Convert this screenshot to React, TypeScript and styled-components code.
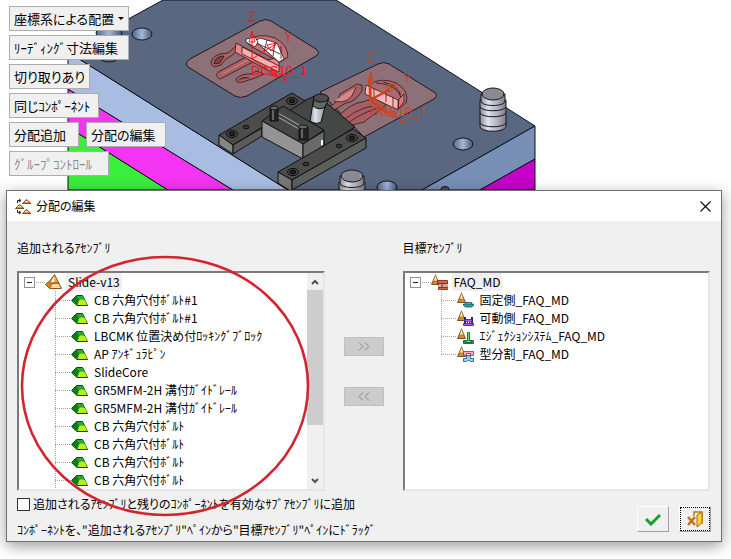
import React, { useState } from "react";
import styled, { createGlobalStyle, css } from "styled-components";

const GlobalStyle = createGlobalStyle`
  * { box-sizing: border-box; }
  body {
    margin: 0;
    background: #fff;
    color: #000;
    font-family: "Noto Sans CJK JP", sans-serif;
    font-size: 12px;
    line-height: 18px;
    font-feature-settings: "palt";
  }
  button, input { font: inherit; font-feature-settings: inherit; color: inherit; }
`;

const Page = styled.main`
  position: relative;
  padding-bottom: 17px;
  overflow: hidden;
`;

const Viewer = styled.section`
  display: grid;
  height: 190px;
  overflow: hidden;
  > * { grid-area: 1 / 1; }
`;

const Drawing = styled.svg`
  display: block;
  width: 100%;
  height: 190px;
`;

const Toolbar = styled.div`
  display: flex;
  flex-direction: column;
  align-items: flex-start;
  gap: 4px;
  padding: 6px 9px;
  z-index: 1;
`;

const ToolRow = styled.div`
  display: flex;
  gap: 7px;
`;

const ToolButton = styled.button<{ $width: number }>`
  display: flex;
  align-items: center;
  gap: 4px;
  min-width: ${(p) => p.$width}px;
  height: 25px;
  padding: 0 4px;
  border: 1px solid #adadad;
  background: #f0f0f0;
  font-size: 13px;
  line-height: 20px;
  white-space: nowrap;
  &:disabled { color: #8a8a8a; }
`;

const Caret = styled.span`
  border: 3px solid transparent;
  border-top-color: #000;
  border-bottom: 0;
`;

const Dialog = styled.section`
  position: relative;
  margin: 0 9px 0 6px;
  border: 1px solid #6f6f6f;
  background: #f0f0f0;
  box-shadow: 0 4px 14px rgba(0, 0, 0, 0.4);
`;

const TitleBar = styled.header`
  display: flex;
  align-items: center;
  gap: 4px;
  height: 30px;
  padding: 0 8px;
  background: #fff;
`;

const Title = styled.h1`
  flex: 1;
  margin: 0;
  font-size: 12px;
  font-weight: 400;
`;

const CloseButton = styled.button`
  display: flex;
  padding: 2px;
  border: 0;
  background: none;
`;

const Panes = styled.div`
  display: grid;
  grid-template-columns: minmax(0, 1fr) 78px minmax(0, 1fr);
  padding: 18px 11px 0 10px;
`;

const Pane = styled.section`
  display: flex;
  flex-direction: column;
  gap: 14px;
`;

const PaneLabel = styled.h2`
  margin: 0;
  font-size: 12px;
  font-weight: 400;
  line-height: 18px;
`;

const TreeBox = styled.div`
  display: flex;
  height: 220px;
  border: 2px solid #fff;
  border-top-color: #7b7b7b;
  border-left-color: #7b7b7b;
  border-right-color: #e6e6e6;
  border-bottom-color: #e6e6e6;
  background: #fff;
`;

const Tree = styled.ul`
  flex: 1;
  margin: 0;
  padding: 0;
  list-style: none;
  overflow: hidden;
`;

const Branch = styled.ul`
  margin: 0;
  padding: 0 0 0 36px;
  list-style: none;
`;

const Row = styled.div`
  display: flex;
  align-items: center;
  height: 18px;
  white-space: nowrap;
`;

const Expander = styled.button`
  display: flex;
  align-items: center;
  justify-content: center;
  width: 11px;
  height: 11px;
  margin-left: 5px;
  padding: 0;
  border: 1px solid #919191;
  background: #fff;
  &::before {
    content: "";
    width: 5px;
    height: 1px;
    background: #222;
  }
`;

const Dash = styled.span`
  width: 10px;
  height: 1px;
  background: repeating-linear-gradient(90deg, #fff 0 1px, #a5a5a5 1px 2px);
`;

const Guide = styled.span<{ $last: boolean }>`
  width: 16px;
  height: 18px;
  background:
    repeating-linear-gradient(180deg, #a5a5a5 0 1px, transparent 1px 2px) 0 0 / 1px ${(p) => (p.$last ? "9px" : "18px")} no-repeat,
    repeating-linear-gradient(90deg, #a5a5a5 0 1px, transparent 1px 2px) 0 9px / 15px 1px no-repeat;
`;

const NodeName = styled.span<{ $selected?: boolean }>`
  margin-left: 4px;
  padding: 0 2px;
  line-height: 18px;
  ${(p) => p.$selected && css`background: #f0f0f0;`}
`;

const NodeIcon = styled.svg`
  flex: none;
  width: 17px;
  height: 16px;
`;

const ScrollBar = styled.div`
  display: flex;
  flex-direction: column;
  width: 16px;
  background: #f0f0f0;
`;

const ScrollArrow = styled.button`
  display: flex;
  align-items: center;
  justify-content: center;
  width: 16px;
  height: 17px;
  padding: 0;
  border: 0;
  background: #f0f0f0;
`;

const ScrollTrack = styled.div`
  flex: 1;
`;

const ScrollThumb = styled.div`
  height: 74%;
  background: #cdcdcd;
`;

const Movers = styled.div`
  display: flex;
  flex-direction: column;
  align-items: center;
  gap: 31px;
  padding-top: 98px;
`;

const MoveButton = styled.button`
  display: flex;
  align-items: center;
  justify-content: center;
  width: 40px;
  height: 19px;
  padding: 0;
  border: 1px solid #bfbfbf;
  background: #ccc;
`;

const Footer = styled.footer`
  display: flex;
  justify-content: space-between;
  align-items: flex-start;
  padding: 4px 10px 0;
  height: 50px;
`;

const FooterText = styled.div`
  display: flex;
  flex-direction: column;
  gap: 8px;
`;

const CheckLabel = styled.label`
  display: flex;
  align-items: center;
  gap: 3px;
`;

const CheckBox = styled.input`
  appearance: none;
  width: 13px;
  height: 13px;
  margin: 0;
  border: 1px solid #333;
  background: #fff;
  &:checked { box-shadow: inset 0 0 0 3px #fff; background: #333; }
`;

const Hint = styled.p`
  margin: 0;
`;

const Actions = styled.div`
  display: flex;
  gap: 10px;
  padding-top: 11px;
`;

const ActionButton = styled.button<{ $focused?: boolean }>`
  display: flex;
  align-items: center;
  justify-content: center;
  width: 32px;
  height: 26px;
  padding: 0;
  background: #f0f0f0;
  border: 1px solid #fff;
  border-right-color: #a0a0a0;
  border-bottom-color: #a0a0a0;
  ${(p) => p.$focused && css`outline: 1px dotted #000; outline-offset: -2px;`}
`;

const Marker = styled.svg`
  position: absolute;
  left: 20px;
  top: 255px;
  width: 291px;
  height: 262px;
  pointer-events: none;
`;

function Hole({ x, y, rx = 10 }: { x: number; y: number; rx?: number }) {
  return <ellipse cx={x} cy={y} rx={rx} ry={6} fill="url(#hole)" stroke="#101722" />;
}

function Pillar({ x, y }: { x: number; y: number }) {
  return (
    <g transform={`translate(${x} ${y})`} stroke="#17171d">
      <path d="M-13 7v26c0 7 26 7 26 0V7z" fill="url(#metal)" />
      <path d="M-12 1v7c0 6 24 6 24 0V1z" fill="url(#metal)" />
      <ellipse cx="0" cy="1" rx="11" ry="6" fill="#8a8a95" />
      <path d="M-13 14c3 5 23 5 26 0M-13 20c3 5 23 5 26 0M-13 30c3 5 23 5 26 0" fill="none" />
    </g>
  );
}

function Screw({ x, y }: { x: number; y: number }) {
  return (
    <g fill="none" stroke="#080808">
      <ellipse cx={x} cy={y} rx="5.5" ry="3.5" />
      <ellipse cx={x} cy={y} rx="3" ry="1.8" fill="#222" />
    </g>
  );
}

function Axes({ x, y, color }: { x: number; y: number; color: string }) {
  return (
    <g stroke={color} fill="none" strokeWidth="1">
      <path d={`M${x} ${y}V${y - 27}m-3 10l3-11 3 11h-6M${x} ${y}l24-15m-9 1l10-2-6 8zM${x} ${y}l27 18m-10-2l9 2-5-7z`} />
      <path d={`M${x - 4} ${y - 47}h7l-7 9h7M${x + 33} ${y - 27}l3 5 4-5m-4 5v5M${x + 29} ${y + 15}l7 8m0-8l-7 8`} />
      <text x={x - 1} y={y + 16} fill={color} stroke="none" fontFamily="Liberation Sans, sans-serif" fontSize="13">DCS10_1</text>
    </g>
  );
}

function MoldDrawing() {
  return (
    <Drawing viewBox="0 0 731 190" preserveAspectRatio="xMinYMin meet" role="img" aria-label="3D">
      <defs>
        <linearGradient id="metal">
          <stop offset="0" stopColor="#8c8c98" />
          <stop offset=".3" stopColor="#e2e2ec" />
          <stop offset=".65" stopColor="#b4b4c2" />
          <stop offset="1" stopColor="#7c7c8a" />
        </linearGradient>
        <linearGradient id="hole">
          <stop offset="0" stopColor="#536582" />
          <stop offset=".5" stopColor="#a2b7dc" />
          <stop offset="1" stopColor="#455675" />
        </linearGradient>
      </defs>
      <g stroke="#0c1018">
        <path d="M68 127L168 190H68z" fill="#3bee3b" />
        <path d="M68 89L233 190H168L68 127z" fill="#f335f3" />
        <path d="M68 52L288 190H233L68 89z" fill="#a9bde3" />
        <path d="M163 0H336L535 126 422 190H288L68 52z" fill="#596780" />
        <path d="M535 126V159L480 190H422z" fill="#788fb6" />
        <path d="M535 159V190H480z" fill="#c600c9" />
      </g>
      <Hole x={109} y={33} rx={13} />
      <ellipse cx="109" cy="56" rx="10" ry="6" fill="#596780" stroke="#101722" />
      <Hole x={142} y={34} />
      <Hole x={463} y={144} />
      <Hole x={387} y={187} />
      <ellipse cx="445" cy="189" rx="4" ry="2.5" fill="#454c55" stroke="#101722" />

      <g stroke="#241519" strokeLinejoin="round">
        <path d="M190 59L260 21q6-3 11 0L316 49q5 4 0 7L247 96q-7 3-12 0L188 67q-4-4 2-8z" fill="#8e7178" />
        <path d="M320 92L378 64q6-3 11 0L434 92q5 3 0 7L364 137z" fill="#8e7178" />
      </g>
      <g fill="#ac6064" stroke="#301317" strokeWidth=".8">
        <path d="M211 64q0-7 9-10l8-1 8-7 5 2-10 8-5 3-5 6-7 2z" />
        <path d="M214 64q1-8 10-8l-4 7z" fill="#7c4347" />
        <path d="M246 57l-26 14c-5 3-4 6 0 8l31-16 3-2z" />
        <path d="M222 74l26-14" fill="none" stroke="#d98e90" />
        <path d="M236 79q6-6 16-5l4-3 8 3-9 4-12 4q-8 1-7-3z" />
        <path d="M239 80q4-4 10-2" fill="#7c4347" />
        <path d="M236 43l32 17 11-3v9l-10 5-34-19z" fill="#e98689" />
        <path d="M246 41q13-9 29-3 13 7 13 19l-8 5-30-16z" fill="#c97074" />
        <path d="M255 41l5-3 17 5 7 16-5 3z" fill="#fff" />
        <path d="M250 40l30 14m-13-14l-3 12m11-10l-2 14m8-10v13" fill="none" />
        <path d="M242 47l37 19v6l-37-18z" fill="#ffadad" />
        <path d="M246 39l9-2 3 5-3 5-9-5z" fill="#fff" />
      </g>
      <g fill="#a85e62" stroke="#311719" strokeWidth=".8">
        <path d="M330 106q8-3 10-12l17-10 5 1v6q-8 12-16 12l-12 7z" />
        <path d="M334 101q16 5 22-14" fill="#d98789" />
        <path d="M335 120q15-17 27-18l14-4 10 7-22 17-12 3-5 8-8-6z" />
        <path d="M340 124q13-14 32-18m-27 20q11-11 33-18" fill="none" />
        <path d="M370 84q12-7 26-1 14 8 10 20l-6 5-35-19z" fill="#ad6a6e" />
        <path d="M376 83q22 1 26 17m-19-18q14 3 18 13" fill="none" />
        <path d="M366 85l32 15v10l-33-16z" fill="#ffb8b8" />
        <path d="M399 99l5-5v8l-6 7z" fill="#db7678" />
        <path d="M374 89v8m12-3v8m7-5v10" fill="none" />
      </g>
      <Axes x={252} y={59} color="#ee171e" />
      <Axes x={371} y={100} color="#ce431d" />
      <path d="M370 100V78m0 22l18 14m-18-14l19-10" fill="none" stroke="#ce431d" strokeWidth="2.5" />

      <g stroke="#101010" strokeLinejoin="round">
        <path d="M290 107l27-12 38 32-29 18-38-28z" fill="#454646" />
        <path d="M219 135L292 93l13 8-72 44z" fill="#4c4d4b" />
        <path d="M219 135l14 10v9l-14-9z" fill="#858585" />
        <path d="M233 145l29-17v8l-29 18z" fill="#5b5c5a" />
        <path d="M262 121l21-15 41 24-21 14z" fill="#454646" />
        <path d="M262 121l41 23v15l-41-22z" fill="#949494" />
        <path d="M303 144l21-13v15l-21 13z" fill="#6a6a6a" />
        <path d="M278 172l75-43 13 9-74 42z" fill="#4c4d4b" />
        <path d="M278 172l14 8v12l-14-9z" fill="#777" />
        <path d="M292 180l74-42v10l-74 42z" fill="#5d5f5b" />
        <path d="M276 116l30 17M278 113l28 16" stroke="#aaa" />
        <path d="M270 108v13h8v-13zM299 127v13h9v-13z" fill="#222" />
        <ellipse cx="274" cy="108" rx="4" ry="2" fill="#666" />
        <ellipse cx="303" cy="127" rx="4.5" ry="2" fill="#666" />
        <path d="M273 110v10M302 129v9" stroke="#aaa" />
        <path d="M314 97l-4 24q6 4 11 1l6-23z" fill="url(#metal)" />
        <path d="M314 97l-1 9q6 5 12 1l4-9z" fill="#666" />
        <ellipse cx="321" cy="98" rx="7.5" ry="4" fill="#4d4d4d" />
        <path d="M322 140v5" stroke="#fff" strokeWidth="2" />
      </g>
      <Screw x={232} y={134} />
      <Screw x={292} y={101} />
      <Screw x={293} y={172} />
      <Screw x={352} y={138} />
      <g fill="#363636" stroke="#111">
        <ellipse cx="246" cy="127" rx="3" ry="1.8" />
        <ellipse cx="306" cy="164" rx="3" ry="1.8" />
        <ellipse cx="339" cy="146" rx="3" ry="1.8" />
      </g>
      <Pillar x={493} y={93} />
      <Pillar x={352} y={175} />
    </Drawing>
  );
}

type IconKind = "slide" | "part" | "root" | "fixed" | "moving" | "ejector" | "split";

function TreeIcon({ kind }: { kind: IconKind }) {
  if (kind === "part") {
    return (
      <NodeIcon viewBox="0 0 17 16" strokeLinejoin="round">
        <path d="M.5 8.5L5.500 3.500H11.500L16.500 13.500H6z" fill="#148a1f" stroke="#0b4b12" />
        <path d="M5.500 4H11.500L13 7.500H8z" fill="#27ad2d" />
        <path d="M1 8.500L5.500 4 7.500 8 6 13z" fill="#117a1c" />
        <path d="M6.500 13L8 8.500Q8.500 7.500 10 7.500H13Q14.500 8 16 13z" fill="#b4f01c" />
      </NodeIcon>
    );
  }
  if (kind === "slide") {
    return (
      <NodeIcon viewBox="0 0 17 16" strokeLinejoin="round">
        <path d="M.5 10.500L5 6.500 9.500.5l7 14H4.500z" fill="#d97a22" stroke="#6d3b12" strokeWidth=".8" />
        <path d="M9.500 1.500v7H5.500z" fill="#fffbd0" />
        <path d="M9.500 1.500l3.500 7H9.500z" fill="#e5b23d" />
        <path d="M6 14l1.500-4H13.500l2 4z" fill="#ffdc9a" />
        <path d="M5.500 9H14" stroke="#7a4515" strokeWidth=".8" />
      </NodeIcon>
    );
  }
  const parts = {
    root: (
      <g stroke="#7a2110" strokeWidth=".8">
        <path d="M8 9h2v5H8zm3 0h1v5h-1zm3 0h2v5h-2z" fill="#fff" />
        <path d="M6.500 6.500h10v3h-10zM7.500 13.500h9v2h-9z" fill="#e2613b" />
      </g>
    ),
    fixed: (
      <g stroke="#0b4f55" strokeWidth=".8">
        <path d="M8.500 10.500h6v2h-6z" fill="#8ee0df" />
        <path d="M6.500 12h10v1.500l-2 1.500h-6l-2-1.500z" fill="#22a5a8" />
      </g>
    ),
    moving: (
      <g stroke="#3f1681" strokeWidth=".8">
        <path d="M8 7v8m7-8v8" strokeWidth="2" />
        <path d="M7.500 9.500h8v2h-8zM6.500 13.500h10v2h-10z" fill="#a35ce9" />
        <path d="M10.500 11.500v2h2v-2" fill="#fff" />
      </g>
    ),
    ejector: (
      <g stroke="#07571b" strokeWidth=".8">
        <path d="M6.500 12.500h10v3h-10z" fill="#169e8a" />
        <path d="M10.500 4.500h2v8h2v2h-6v-2h2z" fill="#4ce84c" />
      </g>
    ),
    split: (
      <g strokeWidth=".8">
        <path d="M6.500 9.500v-4h10v4h-3v-2h-4v2z" fill="#ffa9b2" stroke="#823342" />
        <path d="M6.500 15.500v-3h3v-3h4v3h3v3h-3l-1-1h-2l-1 1z" fill="#8dd2ff" stroke="#244e86" />
      </g>
    ),
  };
  return (
    <NodeIcon viewBox="0 0 17 16" strokeLinejoin="round">
      <path d="M.5 10.500L4.500 1.500l4 9z" fill="#df862c" stroke="#5c300c" strokeWidth=".8" />
      <path d="M2.500 7L4.500.5 6.500 7z" fill="#fff4a8" stroke="#8b6725" strokeWidth=".6" />
      {parts[kind]}
    </NodeIcon>
  );
}

type TreeNode = { name: string; icon: IconKind };

function AssemblyTree({ root, items }: { root: TreeNode; items: TreeNode[] }) {
  const [open, setOpen] = useState(true);
  return (
    <Tree>
      <li>
        <Row>
          <Expander aria-label={root.name} aria-expanded={open} onClick={() => setOpen(!open)} />
          <Dash />
          <TreeIcon kind={root.icon} />
          <NodeName $selected>{root.name}</NodeName>
        </Row>
        {open && (
          <Branch>
            {items.map((item, index) => (
              <li key={index}>
                <Row>
                  <Guide $last={index === items.length - 1 && items.length < 11} />
                  <TreeIcon kind={item.icon} />
                  <NodeName>{item.name}</NodeName>
                </Row>
              </li>
            ))}
          </Branch>
        )}
      </li>
    </Tree>
  );
}

const sourceItems: TreeNode[] = [
  "CB 六角穴付ﾎﾞﾙﾄ#1",
  "CB 六角穴付ﾎﾞﾙﾄ#1",
  "LBCMK 位置決め付ﾛｯｷﾝｸﾞﾌﾞﾛｯｸ",
  "AP ｱﾝｷﾞｭﾗﾋﾟﾝ",
  "SlideCore",
  "GR5MFM-2H 溝付ｶﾞｲﾄﾞﾚｰﾙ",
  "GR5MFM-2H 溝付ｶﾞｲﾄﾞﾚｰﾙ",
  "CB 六角穴付ﾎﾞﾙﾄ",
  "CB 六角穴付ﾎﾞﾙﾄ",
  "CB 六角穴付ﾎﾞﾙﾄ",
  "CB 六角穴付ﾎﾞﾙﾄ",
].map((name) => ({ name, icon: "part" }));

const targetItems: TreeNode[] = [
  { name: "固定側_FAQ_MD", icon: "fixed" },
  { name: "可動側_FAQ_MD", icon: "moving" },
  { name: "ｴｼﾞｪｸｼｮﾝｼｽﾃﾑ_FAQ_MD", icon: "ejector" },
  { name: "型分割_FAQ_MD", icon: "split" },
];

export default function App() {
  const [checked, setChecked] = useState(false);
  return (
    <>
      <GlobalStyle />
      <Page>
        <Viewer>
          <MoldDrawing />
          <Toolbar>
            <ToolButton $width={120} aria-haspopup="menu">座標系による配置<Caret /></ToolButton>
            <ToolButton $width={120}>ﾘｰﾃﾞｨﾝｸﾞ寸法編集</ToolButton>
            <ToolButton $width={80}>切り取りあり</ToolButton>
            <ToolButton $width={90}>同じｺﾝﾎﾟｰﾈﾝﾄ</ToolButton>
            <ToolRow>
              <ToolButton $width={70}>分配追加</ToolButton>
              <ToolButton $width={80}>分配の編集</ToolButton>
            </ToolRow>
            <ToolButton $width={100} disabled>ｸﾞﾙｰﾌﾟｺﾝﾄﾛｰﾙ</ToolButton>
          </Toolbar>
        </Viewer>

        <Dialog role="dialog" aria-labelledby="dialog-title">
          <TitleBar>
            <svg width="17" height="17" viewBox="0 0 17 17">
              <g fill="#df8e3f" stroke="#55310f" strokeWidth=".8" strokeLinejoin="round">
                <path d="M7.500 5.500l4-4 4.500 4zM.5 10.500l4-4 4.500 4zM7.500 15.500l4-4 4.500 4z" />
              </g>
              <path d="M10 3.500h3M3 8.500h3M10 13.500h3" stroke="#ffe9a0" />
              <path d="M2.500 5V2.500H5M4 1l2 1.500L4 4M2.500 12v2.500H5M4 13l2 1.500L4 16" fill="none" stroke="#222" />
            </svg>
            <Title id="dialog-title">分配の編集</Title>
            <CloseButton aria-label="閉じる">
              <svg width="11" height="11" viewBox="0 0 11 11"><path d="M.5.5l10 10m0-10l-10 10" stroke="#111" strokeWidth="1.2" /></svg>
            </CloseButton>
          </TitleBar>

          <Panes>
            <Pane>
              <PaneLabel>追加されるｱｾﾝﾌﾞﾘ</PaneLabel>
              <TreeBox>
                <AssemblyTree root={{ name: "Slide-v13", icon: "slide" }} items={sourceItems} />
                <ScrollBar>
                  <ScrollArrow aria-label="上">
                    <svg width="8" height="6" viewBox="0 0 8 6"><path d="M1 5l3-3 3 3" fill="none" stroke="#505050" strokeWidth="2" /></svg>
                  </ScrollArrow>
                  <ScrollTrack><ScrollThumb /></ScrollTrack>
                  <ScrollArrow aria-label="下">
                    <svg width="8" height="6" viewBox="0 0 8 6"><path d="M1 1l3 3 3-3" fill="none" stroke="#505050" strokeWidth="2" /></svg>
                  </ScrollArrow>
                </ScrollBar>
              </TreeBox>
            </Pane>
            <Movers>
              <MoveButton aria-label="追加">
                <svg width="12" height="9" viewBox="0 0 12 9"><path d="M1 .5l4 4-4 4m6-8l4 4-4 4" fill="none" stroke="#858585" /></svg>
              </MoveButton>
              <MoveButton aria-label="戻す">
                <svg width="12" height="9" viewBox="0 0 12 9"><path d="M5 .5l-4 4 4 4m6-8l-4 4 4 4" fill="none" stroke="#858585" /></svg>
              </MoveButton>
            </Movers>
            <Pane>
              <PaneLabel>目標ｱｾﾝﾌﾞﾘ</PaneLabel>
              <TreeBox>
                <AssemblyTree root={{ name: "FAQ_MD", icon: "root" }} items={targetItems} />
              </TreeBox>
            </Pane>
          </Panes>

          <Footer>
            <FooterText>
              <CheckLabel>
                <CheckBox type="checkbox" checked={checked} onChange={(e) => setChecked(e.target.checked)} />
                追加されるｱｾﾝﾌﾞﾘと残りのｺﾝﾎﾟｰﾈﾝﾄを有効なｻﾌﾞｱｾﾝﾌﾞﾘに追加
              </CheckLabel>
              <Hint>ｺﾝﾎﾟｰﾈﾝﾄを、"追加されるｱｾﾝﾌﾞﾘ"ﾍﾟｲﾝから"目標ｱｾﾝﾌﾞﾘ"ﾍﾟｲﾝにﾄﾞﾗｯｸﾞ</Hint>
            </FooterText>
            <Actions>
              <ActionButton aria-label="OK">
                <svg width="16" height="13" viewBox="0 0 16 13"><path d="M1 6l5 5 9-9" fill="none" stroke="#16a02c" strokeWidth="3" /></svg>
              </ActionButton>
              <ActionButton $focused aria-label="キャンセル">
                <svg width="18" height="18" viewBox="0 0 18 18">
                  <path d="M8 6V2h8v11h-3" fill="#fff4cc" stroke="#b57816" strokeWidth="1.5" />
                  <path d="M11 5l5-3v11l-5 4z" fill="#ffd12d" stroke="#a96b10" />
                  <path d="M2 7l7 8m0-8l-7 8" stroke="#bd7612" strokeWidth="2.5" />
                </svg>
              </ActionButton>
            </Actions>
          </Footer>
        </Dialog>

        <Marker viewBox="0 0 291 262">
          <ellipse cx="145" cy="131" rx="143" ry="129" fill="none" stroke="#d3252e" strokeWidth="2.6" />
        </Marker>
      </Page>
    </>
  );
}
